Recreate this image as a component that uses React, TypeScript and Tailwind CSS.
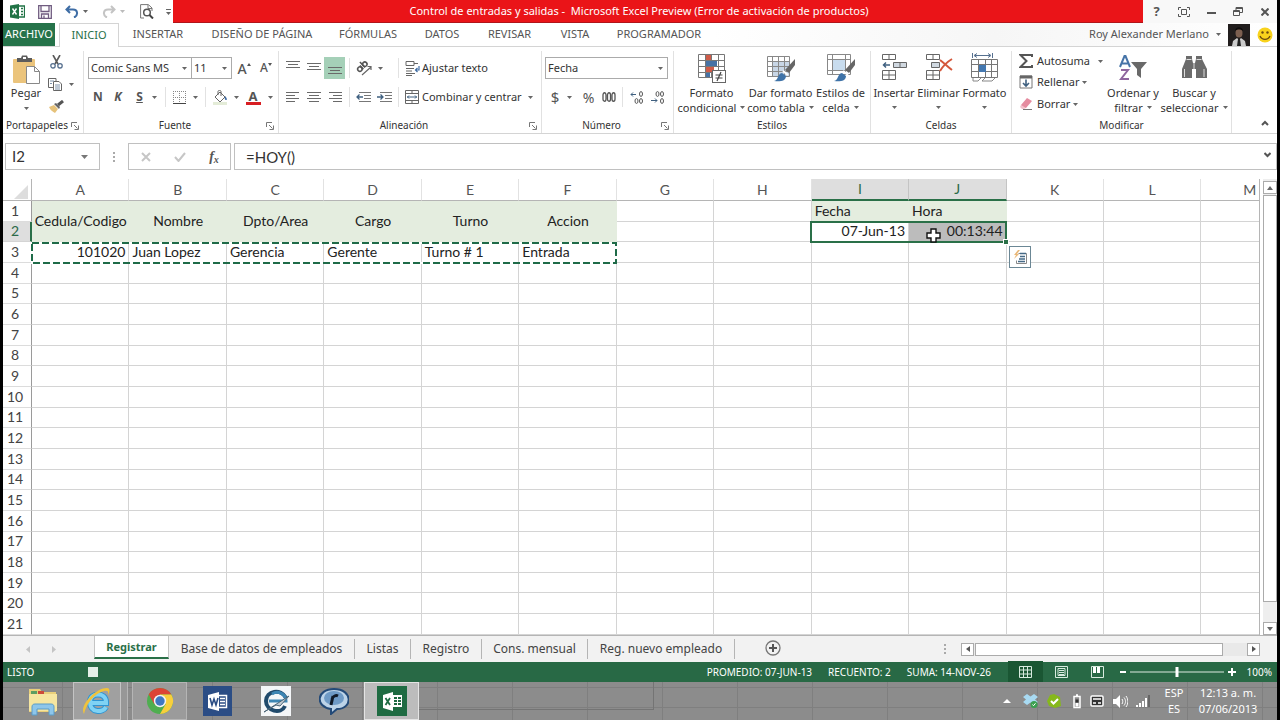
import type { ReactNode } from 'react';

const COLUMNS = ['A', 'B', 'C', 'D', 'E', 'F', 'G', 'H', 'I', 'J', 'K', 'L', 'M'];
const HEADINGS = ['Cedula/Codigo', 'Nombre', 'Dpto/Area', 'Cargo', 'Turno', 'Accion'];
const RECORD = ['101020', 'Juan Lopez', 'Gerencia', 'Gerente', 'Turno # 1', 'Entrada'];
const RIBBON_TABS = [
  { label: 'INSERTAR', box: 'w-[78px]' },
  { label: 'DISEÑO DE PÁGINA', box: 'w-[130px]' },
  { label: 'FÓRMULAS', box: 'w-[82px]' },
  { label: 'DATOS', box: 'w-[66px]' },
  { label: 'REVISAR', box: 'w-[69px]' },
  { label: 'VISTA', box: 'w-[62px]' },
  { label: 'PROGRAMADOR', box: 'w-[106px]' },
];
const SHEETS = [
  { label: 'Base de datos de empleados', box: 'w-[186px]' },
  { label: 'Listas', box: 'w-[56px]' },
  { label: 'Registro', box: 'w-[71px]' },
  { label: 'Cons. mensual', box: 'w-[106px]' },
  { label: 'Reg. nuevo empleado', box: 'w-[147px]' },
];

interface IconProps {
  w: number;
  h: number;
  children: ReactNode;
}

function Icon({ w, h, children }: IconProps) {
  return (
    <svg width={w} height={h} viewBox={`0 0 ${w} ${h}`} fill="none" className="shrink-0" aria-hidden="true">
      {children}
    </svg>
  );
}

function Caret({ color = '#666' }: { color?: string }) {
  return (
    <Icon w={5} h={3}>
      <path d="M0 0h5L2.500 3z" fill={color} />
    </Icon>
  );
}

interface ToolProps {
  label: string;
  box?: string;
  children: ReactNode;
}

function Tool({ label, box = 'w-[21px]', children }: ToolProps) {
  return (
    <button type="button" aria-label={label} className={`flex h-[22px] shrink-0 items-center justify-center ${box}`}>
      {children}
    </button>
  );
}

function Divider() {
  return <span className="h-5 w-px shrink-0 bg-[#e2e2e2]" />;
}

interface GroupProps {
  title: string;
  box: string;
  launcher?: boolean;
  children: ReactNode;
}

function Group({ title, box, launcher, children }: GroupProps) {
  return (
    <section className={`flex shrink-0 flex-col border-r border-[#e1e1e1] ${box}`}>
      <div className="h-[67px]">{children}</div>
      <div className="flex h-[15px] items-center text-[10px]">
        <h2 className="flex-1 text-center">{title}</h2>
        {launcher && (
          <button type="button" aria-label={`Más opciones de ${title}`} className="pr-1">
            <Icon w={8} h={8}>
              <path d="M.5 5V.5H6M3 3l3.500 3.500M7.500 3.500v4h-4" stroke="#777" />
            </Icon>
          </button>
        )}
      </div>
    </section>
  );
}

interface BigToolProps {
  lines: string[];
  box: string;
  children: ReactNode;
}

function BigTool({ lines, box, children }: BigToolProps) {
  return (
    <button type="button" className={`flex shrink-0 flex-col items-center pt-[2px] text-[11px] leading-[15px] ${box}`}>
      {children}
      <span className="mt-[2px] whitespace-nowrap">{lines[0]}</span>
      <span className="flex h-[15px] items-center gap-1 whitespace-nowrap">
        {lines[1]}
        <Caret />
      </span>
    </button>
  );
}

interface DropDownProps {
  label: string;
  value: string;
  box: string;
}

function DropDown({ label, value, box }: DropDownProps) {
  return (
    <span className={`relative flex h-[22px] items-center border border-[#ababab] ${box}`}>
      <select aria-label={label} className="h-full w-full appearance-none pl-[2px] text-[11px] outline-none">
        <option>{value}</option>
      </select>
      <span className="pointer-events-none absolute right-1">
        <Caret />
      </span>
    </span>
  );
}

function Lines({ widths, align }: { widths: number[]; align: 'left' | 'center' | 'right' }) {
  return (
    <Icon w={14} h={14}>
      {widths.map((width, i) => {
        const x = align === 'left' ? 0 : align === 'right' ? 14 - width : (14 - width) / 2;
        return <rect key={i} x={x} y={2 + i * 3} width={width} height={1} fill="#6a6a6a" />;
      })}
    </Icon>
  );
}

function TitleBar() {
  return (
    <header className="flex h-[23px] shrink-0 bg-white">
      <div className="flex w-[170px] items-center pl-[7px]">
        <Icon w={15} h={15}>
          <path d="M0 1.500 9 0v15L0 13.500z" fill="#217346" />
          <path d="M2.500 4.500l4 6M6.500 4.500l-4 6" stroke="#fff" strokeWidth="1.400" />
          <path d="M9 2h5.500v11H9M11 4.500h2M11 7.500h2M11 10.500h2" stroke="#217346" strokeWidth="1.300" />
        </Icon>
        <Tool label="Guardar" box="ml-2 w-6">
          <Icon w={14} h={14}>
            <path d="M.7.7h12.600v12.600H.7zM3 .7v5.800h8V.7M3.500 13V9h7v4M6 10.500V13" stroke="#705c80" strokeWidth="1.300" />
          </Icon>
        </Tool>
        <Tool label="Deshacer" box="ml-1 w-[22px]">
          <Icon w={14} h={13}>
            <path d="M5 1 1.500 4.500 5 8M2 4.500h6c5 0 5.500 6 1 8" stroke="#3e6da5" strokeWidth="2" />
          </Icon>
        </Tool>
        <Caret />
        <Tool label="Rehacer" box="ml-[10px] w-[22px]">
          <Icon w={14} h={13}>
            <path d="M9 1l3.500 3.500L9 8M12 4.500H6c-5 0-5.500 6-1 8" stroke="#c4c4c4" strokeWidth="2" />
          </Icon>
        </Tool>
        <Caret color="#bbb" />
        <Tool label="Vista previa" box="ml-[11px] w-[22px]">
          <Icon w={14} h={15}>
            <path d="M4 14H.6V.6h7.800L12 4v3M8 1v3.500h4" stroke="#777" />
            <circle cx="7" cy="8.500" r="3.300" stroke="#555" strokeWidth="1.500" />
            <path d="M9.500 11l3.500 3.500" stroke="#444" strokeWidth="2" />
          </Icon>
        </Tool>
        <Tool label="Personalizar" box="ml-1 w-3">
          <Icon w={5} h={6}>
            <path d="M0 .5h5" stroke="#666" />
            <path d="M0 3h5L2.500 6z" fill="#666" />
          </Icon>
        </Tool>
      </div>
      <h1 className="flex min-w-0 flex-1 items-center justify-center border-b border-[#b0151a] bg-[#ea1418] pr-[38px] text-[11px] whitespace-pre text-white">
        {'Control de entradas y salidas -  Microsoft Excel Preview (Error de activación de productos)'}
      </h1>
      <div className="flex w-[134px] items-center bg-[#f8f8f8]">
        <Tool label="Ayuda" box="w-[27px] text-[13px] font-bold text-[#555]">?</Tool>
        <Tool label="Pantalla" box="w-7">
          <Icon w={12} h={10}>
            <path d="M.5 3V.5H3M9 .5h2.500V3M11.500 7v2.500H9M3 9.500H.5V7M3.500 2.500h5v5h-5z" stroke="#555" />
          </Icon>
        </Tool>
        <Tool label="Minimizar" box="w-[26px]">
          <Icon w={9} h={8}>
            <path d="M0 5h9" stroke="#555" strokeWidth="2" />
          </Icon>
        </Tool>
        <Tool label="Restaurar" box="w-7">
          <Icon w={10} h={9}>
            <path d="M.5 3.500h6v5h-6zM.5 4.500h6M3 3V.5h6.500v5H7M3 1.500h6" stroke="#555" />
          </Icon>
        </Tool>
        <Tool label="Cerrar" box="w-[25px]">
          <Icon w={8} h={8}>
            <path d="M.5.5l7 7M7.500.5l-7 7" stroke="#555" strokeWidth="2" />
          </Icon>
        </Tool>
      </div>
    </header>
  );
}

function TabStrip() {
  return (
    <nav className="flex h-6 shrink-0 border-b border-[#d4d4d4] bg-white text-[11px] text-[#555]">
      <button type="button" className="w-[52px] bg-[#26734a] text-white">
        ARCHIVO
      </button>
      <button type="button" className="-mb-px ml-1 w-[60px] border border-b-0 border-[#d4d4d4] bg-white text-[#2a7048]">
        INICIO
      </button>
      {RIBBON_TABS.map(tab => (
        <button key={tab.label} type="button" className={`shrink-0 whitespace-nowrap ${tab.box}`}>
          {tab.label}
        </button>
      ))}
      <div className="flex flex-1 items-center justify-end bg-linear-to-r from-white via-[#f6f6f6] to-white text-[11px]">
        <button type="button" className="flex items-center gap-[7px]">
          Roy Alexander Merlano
          <Caret />
        </button>
        <svg width="22" height="22" viewBox="0 0 22 22" className="ml-[7px] shrink-0" aria-hidden="true">
          <rect width="22" height="22" fill="#211d1d" />
          <ellipse cx="11" cy="9" rx="3.500" ry="4.500" fill="#7c5f50" />
          <path d="M7 7c0-5 8-5 8 0-2-2-6-2-8 0z" fill="#0e0c0c" />
          <path d="M4 22l1-5 4-3 2 2 2-2 4 3 1 5z" fill="#ccc" />
          <path d="M10 15h2l1 7H9z" fill="#222" />
        </svg>
        <svg width="16" height="16" viewBox="0 0 16 16" className="mr-1 ml-[7px] shrink-0" aria-hidden="true">
          <circle cx="8" cy="8" r="7.500" fill="#f8d21c" />
          <circle cx="5.500" cy="5.500" r="1.200" fill="#6a4a10" />
          <circle cx="10.500" cy="5.500" r="1.200" fill="#6a4a10" />
          <path d="M3 9c2 4.500 8 4.500 10 0" stroke="#6a4a10" strokeWidth="1.300" fill="none" />
        </svg>
      </div>
    </nav>
  );
}

function ClipboardGroup() {
  return (
    <Group title="Portapapeles" box="w-[81px]" launcher>
      <div className="flex pl-[5px]">
        <button type="button" className="flex w-9 flex-col items-center pt-1 text-[11px]">
          <Icon w={28} h={29}>
            <rect x="1" y="4" width="22" height="24" rx="1" fill="#ebc47c" />
            <path d="M5 7V3h4l1-2.500h5L16 3h4v4z" fill="#5c5c5c" />
            <rect x="11" y="2" width="3" height="2" fill="#fff" />
            <path d="M14.500 11.500h8l5 5v12h-13z" fill="#fff" stroke="#888" />
            <path d="M22.500 11.500v5h5" stroke="#888" />
          </Icon>
          <span className="mb-[5px] leading-[18px]">Pegar</span>
          <Caret />
        </button>
        <div className="flex flex-col">
          <Tool label="Cortar" box="w-6">
            <Icon w={13} h={14}>
              <path d="M3 0l5 9M10 0L5 9" stroke="#5a5a5a" strokeWidth="1.600" />
              <circle cx="3" cy="10.800" r="2.200" stroke="#56708f" strokeWidth="1.300" />
              <circle cx="10" cy="10.800" r="2.200" stroke="#56708f" strokeWidth="1.300" />
            </Icon>
          </Tool>
          <Tool label="Copiar" box="ml-1 gap-[7px]">
            <Icon w={14} h={13}>
              <path d="M8 3V.5H.5v9H5" stroke="#666" />
              <path d="M5.500 3.500H11l2.500 2.500v6.500h-8z" fill="#fff" stroke="#666" />
              <path d="M2 3h4M2 5.500h2M7 7h5M7 9h5M7 11h5" stroke="#7d93ad" />
            </Icon>
            <Caret />
          </Tool>
          <Tool label="Copiar formato" box="w-6">
            <Icon w={15} h={13}>
              <path d="M0 7l5-2 4 4-3 4c-2-1-5-3-6-6z" fill="#e6c27a" />
              <path d="M5 4l2-1 4 4-1 2z" fill="#666" />
              <path d="M9 5l5-4" stroke="#555" strokeWidth="3" />
            </Icon>
          </Tool>
        </div>
      </div>
    </Group>
  );
}

function FontGroup() {
  return (
    <Group title="Fuente" box="w-[195px]" launcher>
      <div className="flex flex-col gap-[7px] pt-[6px] pl-1">
        <div className="flex items-center">
          <DropDown label="Fuente" value="Comic Sans MS" box="w-[104px]" />
          <DropDown label="Tamaño" value="11" box="w-10 border-l-0" />
          <Tool label="Aumentar tamaño" box="w-6 text-[14px] font-medium text-[#555]">
            A<span className="-mt-2"><Icon w={4} h={3}><path d="M0 3h4L2 0z" fill="#555" /></Icon></span>
          </Tool>
          <Tool label="Reducir tamaño" box="w-5 text-[12px] font-medium text-[#555]">
            A<span className="-mt-2"><Icon w={4} h={3}><path d="M0 0h4L2 3z" fill="#555" /></Icon></span>
          </Tool>
        </div>
        <div className="flex items-center text-[12px] text-[#555]">
          <Tool label="Negrita" box="w-5 font-bold">N</Tool>
          <Tool label="Cursiva" box="w-5 font-bold italic">K</Tool>
          <Tool label="Subrayado" box="w-[37px] gap-[9px] font-bold">
            <span className="underline">S</span>
            <Caret />
          </Tool>
          <Divider />
          <Tool label="Bordes" box="mx-1 w-[31px] gap-[7px]">
            <Icon w={13} h={13}>
              <path d="M.5 0v12M6.500 0v12M12.500 0v12M0 .5h13M0 6.500h13" stroke="#888" strokeDasharray="1 1" />
              <path d="M0 12.500h13" stroke="#444" />
            </Icon>
            <Caret />
          </Tool>
          <Divider />
          <Tool label="Color de relleno" box="ml-[3px] w-[34px] gap-[6px]">
            <Icon w={15} h={15}>
              <path d="M2 7l5-5 5 5-5 5z" fill="#fff" stroke="#666" />
              <path d="M5 5V1.500c0-1.500 3-1.500 3 0V6" stroke="#666" />
              <path d="M12 6c2 2 2.500 4 1 4s-1.500-2-1-4z" fill="#3f6ca4" />
              <rect x="0" y="12" width="14" height="3" fill="#e4ecd8" />
            </Icon>
            <Caret />
          </Tool>
          <Tool label="Color de fuente" box="w-8 gap-[7px]">
            <span className="w-[15px] border-b-[3px] border-[#d81e23] text-[13px] leading-[12px] font-bold">A</span>
            <Caret />
          </Tool>
        </div>
      </div>
    </Group>
  );
}

function AlignGroup() {
  return (
    <Group title="Alineación" box="w-[263px]" launcher>
      <div className="flex flex-col gap-[7px] pt-[6px] pl-[3px] text-[11px]">
        <div className="flex items-center">
          <Tool label="Alinear arriba" box="w-[21px] pb-1"><Lines widths={[14, 10, 14]} align="center" /></Tool>
          <Tool label="Alinear en medio"><Lines widths={[14, 10, 14]} align="center" /></Tool>
          <Tool label="Alinear abajo" box="w-[21px] bg-[#a5d0b8] pt-2"><Lines widths={[14, 10, 14]} align="center" /></Tool>
          <span className="w-1" />
          <Divider />
          <Tool label="Orientación" box="mx-[4px] w-[40px] gap-1 pr-3">
            <Icon w={20} h={20}>
              <g stroke="#555" strokeWidth="1.500" transform="rotate(-45 8 9)">
                <circle cx="5" cy="9" r="2.200" />
                <path d="M7.500 6.500v5M10 4v7.500" />
                <circle cx="12" cy="9" r="2.200" />
              </g>
              <path d="M8 17l9-8M13.500 8.500H17V12" stroke="#666" strokeWidth="1.200" />
            </Icon>
            <Caret />
          </Tool>
          <Divider />
          <button type="button" className="flex items-center gap-[2px] pl-[6px]">
            <Icon w={15} h={15}>
              <path d="M1 .5v4h8v-4zM9 2.500h4M1 7.500h8M1 10h6M1 12.500h9M1 14.500h6" stroke="#666" />
              <path d="M14 5v4h-3M12.500 7 10.500 9l2 2" stroke="#3f6ca4" strokeWidth="1.200" />
            </Icon>
            Ajustar texto
          </button>
        </div>
        <div className="flex items-center">
          <Tool label="Alinear a la izquierda"><Lines widths={[13, 9, 13, 9]} align="left" /></Tool>
          <Tool label="Centrar"><Lines widths={[14, 10, 14, 10]} align="center" /></Tool>
          <Tool label="Alinear a la derecha"><Lines widths={[13, 9, 13, 9]} align="right" /></Tool>
          <span className="w-1" />
          <Divider />
          <span className="w-[3px]" />
          <Tool label="Disminuir sangría">
            <Icon w={15} h={11}>
              <path d="M3 .5h12M8 3.500h7M8 6.500h7M3 9.500h12" stroke="#777" />
              <path d="M7 5H1M3.500 2.500 1 5l2.500 2.500" stroke="#3f6080" strokeWidth="1.300" />
            </Icon>
          </Tool>
          <Tool label="Aumentar sangría">
            <Icon w={15} h={11}>
              <path d="M3 .5h12M8 3.500h7M8 6.500h7M3 9.500h12" stroke="#777" />
              <path d="M0 5h6M3.500 2.500 6 5 3.500 7.500" stroke="#3f6080" strokeWidth="1.300" />
            </Icon>
          </Tool>
          <span className="w-[3px]" />
          <Divider />
          <button type="button" className="flex items-center gap-[2px] pl-[6px] whitespace-nowrap">
            <Icon w={15} h={14}>
              <path d="M.5.5h13v13H.5zM.5 3.500h13M.5 10.500h13M7 .5v3M7 10.500v3" stroke="#666" />
              <path d="M2 7h10M4 5.500 2.500 7 4 8.500M10 5.500 11.500 7 10 8.500" stroke="#3f6080" />
            </Icon>
            Combinar y centrar
            <span className="ml-1"><Caret /></span>
          </button>
        </div>
      </div>
    </Group>
  );
}

function NumberGroup() {
  return (
    <Group title="Número" box="w-[132px]" launcher>
      <div className="flex flex-col gap-[7px] pt-[6px] pl-[3px] text-[#555]">
        <DropDown label="Formato de número" value="Fecha" box="w-[123px] text-[#333]" />
        <div className="flex items-center">
          <Tool label="Moneda" box="w-[33px] gap-2 text-[15px]">
            $<Caret />
          </Tool>
          <Tool label="Porcentaje" box="w-[21px] text-[14px]">%</Tool>
          <Tool label="Millares" box="w-[19px]">
            <Icon w={14} h={10}>
              <path d="M1 3c0-3 3-3 3 0v4c0 3-3 3-3 0zM5.500 3c0-3 3-3 3 0v4c0 3-3 3-3 0zM10 3c0-3 3-3 3 0v4c0 3-3 3-3 0z" stroke="#555" strokeWidth="1.300" />
            </Icon>
          </Tool>
          <span className="w-1" />
          <Divider />
          <Tool label="Aumentar decimales" box="ml-1 w-[20px]">
            <Icon w={14} h={13}>
              <path d="M6 3.500H1M3 1.500 1 3.500l2 2" stroke="#3f6080" />
              <ellipse cx="11" cy="3" rx="1.500" ry="2.400" stroke="#555" />
              <ellipse cx="6.500" cy="10" rx="1.500" ry="2.400" stroke="#555" />
              <ellipse cx="11" cy="10" rx="1.500" ry="2.400" stroke="#555" />
            </Icon>
          </Tool>
          <Tool label="Disminuir decimales">
            <Icon w={14} h={13}>
              <path d="M0 9.500h6M4 7.500l2 2-2 2" stroke="#3f6080" />
              <ellipse cx="11" cy="3" rx="1.500" ry="2.400" stroke="#555" />
              <ellipse cx="6.500" cy="3" rx="1.500" ry="2.400" stroke="#555" />
              <ellipse cx="11" cy="10" rx="1.500" ry="2.400" stroke="#555" />
            </Icon>
          </Tool>
        </div>
      </div>
    </Group>
  );
}

function Brush() {
  return (
    <>
      <path d="M28 6v6l-6 8-4-3z" fill="#666" />
      <path d="M16 18l5 4" stroke="#fff" strokeWidth="2" />
      <path d="M7 28c5-1 3-7 8-8l4 3c0 5-6 6-12 5z" fill="#3f73a8" />
    </>
  );
}

function StylesGroup() {
  return (
    <Group title="Estilos" box="w-[197px]">
      <div className="flex">
        <BigTool lines={['Formato', 'condicional']} box="w-[75px]">
          <Icon w={28} h={30}>
            <path d="M.5 1.500h26v23H.5zM.5 7.500h26M.5 13.500h26M.5 19.500h26M7.500 1v24M13.500 1v24M20.500 1v24" stroke="#777" />
            <rect x="8" y="2" width="5" height="5" fill="#cf5b48" />
            <rect x="8" y="8" width="11" height="5" fill="#4672a6" />
            <rect x="8" y="14" width="8" height="5" fill="#cf5b48" />
            <rect x="8" y="20" width="4" height="4" fill="#4672a6" />
            <rect x="14.500" y="17.500" width="13" height="12" fill="#fff" stroke="#666" />
            <path d="M17.500 22h7M17.500 25h7M23 19l-4 9" stroke="#444" strokeWidth="1.200" />
          </Icon>
        </BigTool>
        <BigTool lines={['Dar formato', 'como tabla']} box="w-[63px]">
          <Icon w={28} h={30}>
            <rect x="6" y="9" width="16" height="14" fill="#c8d6e6" />
            <path d="M.5 3.500h22v20H.5zM.5 8.500h22M.5 13.500h22M.5 18.500h22M5.500 3v20M11.500 3v20M17.500 3v20" stroke="#888" />
            <Brush />
          </Icon>
        </BigTool>
        <BigTool lines={['Estilos de', 'celda']} box="w-[57px]">
          <Icon w={28} h={30}>
            <rect x="6" y="7" width="12" height="10" fill="#c8dcee" />
            <path d="M.5 1.500h23v20H.5zM.5 6.500h23M.5 17.500h23M5.500 1v20M18.500 1v20" stroke="#888" />
            <Brush />
          </Icon>
        </BigTool>
      </div>
    </Group>
  );
}

function CellsGroup() {
  return (
    <Group title="Celdas" box="w-[141px]">
      <div className="flex">
        <BigTool lines={['Insertar', '']} box="w-[46px]">
          <Icon w={26} h={30}>
            <path d="M1.500 1.500h13v5h-13zM8 1.500v5M1.500 17.500h13v9h-13zM8 17.500v9M1.500 22h13" stroke="#666" />
            <path d="M12.500 9.500h13v5h-13z" fill="#d0d8e0" stroke="#666" />
            <path d="M19 9.500v5" stroke="#666" />
            <path d="M9 12H2.500M5 9.500 2.500 12 5 14.500" stroke="#3f6080" strokeWidth="1.500" />
          </Icon>
        </BigTool>
        <BigTool lines={['Eliminar', '']} box="w-[43px]">
          <Icon w={28} h={30}>
            <path d="M1.500 1.500h13v5h-13zM8 1.500v5M1.500 17.500h13v9h-13zM8 17.500v9M1.500 22h13" stroke="#666" />
            <path d="M6.500 9.500h8v5h-8z" fill="#d0d8e0" stroke="#666" />
            <path d="M15 7c4 3 8 7 12 10M27 6c-5 3-9 7-12 12" stroke="#d4583c" strokeWidth="2" />
          </Icon>
        </BigTool>
        <BigTool lines={['Formato', '']} box="w-[49px]">
          <Icon w={27} h={30}>
            <path d="M1.500 0v5M21.500 0v5M4 2.500h15M6 .5l-3 2 3 2M17 .5l3 2-3 2" stroke="#56708f" />
            <path d="M.5 6.500h26v18H.5zM.5 11.500h26M.5 18.500h26M7.500 6v18M14.500 6v18M20.500 6v18" stroke="#777" />
            <rect x="8" y="12" width="7" height="7" fill="#4478b0" />
            <path d="M2 25v3h5l3-3M14 25l-3 3h10l3-3" stroke="#888" />
          </Icon>
        </BigTool>
      </div>
    </Group>
  );
}

function EditGroup() {
  return (
    <Group title="Modificar" box="w-[220px]">
      <div className="flex">
        <div className="flex w-[91px] flex-col pl-[7px] text-[11px]">
          <button type="button" className="flex h-5 items-center">
            <Icon w={15} h={14}>
              <path d="M13 3V1H1.500l6 6-6 6H13v-2" stroke="#555" strokeWidth="2" />
            </Icon>
            <span className="ml-[3px] flex-1 text-left">Autosuma</span>
            <Caret />
          </button>
          <button type="button" className="flex h-[22px] items-center gap-[3px]">
            <Icon w={15} h={14}>
              <path d="M1 1h12v12H1z" stroke="#777" />
              <path d="M1 2h12" stroke="#666" strokeWidth="3" />
              <path d="M7 4.500V11M4 8l3 3 3-3" stroke="#3f6080" strokeWidth="1.600" />
            </Icon>
            Rellenar
            <Caret />
          </button>
          <button type="button" className="flex h-[22px] items-center gap-[3px]">
            <Icon w={15} h={14}>
              <path d="M2 8l6-7 5 3-6 7-4 0z" fill="#e58ca0" />
              <path d="M2 8l5 3-2 1H3L1 10z" fill="#f3c3cd" />
              <path d="M4 12.500h9" stroke="#777" />
            </Icon>
            Borrar
            <Caret />
          </button>
        </div>
        <BigTool lines={['Ordenar y', 'filtrar']} box="w-[60px]">
          <Icon w={28} h={30}>
            <path d="M1 14 5.500 3h1L11 14M3 10.500h6" stroke="#4674a8" strokeWidth="2" />
            <path d="M2 17h7L2 26h8" stroke="#8f679f" strokeWidth="2" />
            <path d="M12 9h16l-6 7v9l-4-3v-6z" fill="#696969" />
          </Icon>
        </BigTool>
        <BigTool lines={['Buscar y', 'seleccionar']} box="w-[62px]">
          <Icon w={26} h={30}>
            <path d="M5 6V3h6v3l1 4h2l1-4V3h6v3l5 10v9H15v-9h-4v9H1v-9z" fill="#6b6b6b" />
            <path d="M5.500 6.500h5M15.500 6.500h5M3.500 16v8M23 16v8M13 10v6" stroke="#ddd" />
          </Icon>
        </BigTool>
      </div>
    </Group>
  );
}

function FormulaBar() {
  return (
    <div className="my-[9px] flex h-[27px] shrink-0 pl-[2px] text-[#333]">
      <label className="flex w-[95px] items-center border border-[#c0c0c0] bg-white pr-[11px]">
        <input aria-label="Cuadro de nombres" defaultValue="I2" className="w-full min-w-0 pl-[6px] font-['Lato',sans-serif] text-[15px] outline-none" />
        <Icon w={7} h={4}>
          <path d="M0 0h7L3.500 4z" fill="#777" />
        </Icon>
      </label>
      <span className="flex w-7 items-center justify-center">
        <Icon w={2} h={10}>
          <path d="M0 0h2v2H0zM0 4h2v2H0zM0 8h2v2H0z" fill="#aaa" />
        </Icon>
      </span>
      <div className="flex w-[103px] items-center border border-[#c0c0c0] bg-white pl-[1px]">
        <Tool label="Cancelar" box="w-8">
          <Icon w={10} h={10}><path d="M1 1l8 8M9 1 1 9" stroke="#c6c6c6" strokeWidth="2" /></Icon>
        </Tool>
        <Tool label="Introducir" box="w-9">
          <Icon w={12} h={10}><path d="M1 5l3.500 4L11 1" stroke="#c6c6c6" strokeWidth="2" /></Icon>
        </Tool>
        <Tool label="Insertar función" box="w-8 font-['Liberation_Serif',serif] text-[14px] font-bold italic leading-[14px] text-[#555]">
          <span>f<sub className="text-[10px]">x</sub></span>
        </Tool>
      </div>
      <label className="ml-[3px] flex flex-1 items-start border border-[#c0c0c0] bg-white pr-[5px]">
        <input aria-label="Barra de fórmulas" defaultValue="=HOY()" className="h-full w-full pl-[11px] font-['Lato',sans-serif] text-[15px] outline-none" />
        <span className="mt-2">
          <Icon w={7} h={6}><path d="M.5 1l3 3 3-3" stroke="#555" strokeWidth="2" /></Icon>
        </span>
      </label>
    </div>
  );
}

function cellContent(column: number, row: number) {
  if (row === 3 && column < 6) return RECORD[column];
  if (row === 1 && column === 8) return 'Fecha';
  if (row === 1 && column === 9) return 'Hora';
  if (row === 2 && column === 8) return '07-Jun-13';
  if (row === 2 && column === 9) return '00:13:44';
  return '';
}

function cellLook(column: number, row: number) {
  const side = (row === 3 && column === 0) || row === 2 ? 'text-right' : 'text-left';
  if (row === 1 && (column === 8 || column === 9)) return `bg-[#e4eddf] border-[#e4eddf] ${side}`;
  if (row === 2 && column === 9) return `bg-[#bcbcbc] border-[#d4d4d4] ${side}`;
  return `border-[#d4d4d4] ${side}`;
}

function Sheet() {
  return (
    <div className="relative min-w-0 flex-1 overflow-hidden border-r border-[#b5b5b5]">
      <table className="h-[456px] w-[1296px] table-fixed border-separate border-spacing-0 font-['Lato',sans-serif] text-[14px] leading-[18px] text-[#222]">
        <thead>
          <tr className="h-[22px] text-[#555]">
            <th className="w-[29px] border-r border-b border-[#b5b5b5] p-0">
              <svg width="14" height="14" viewBox="0 0 14 14" className="mt-1 ml-[11px]" aria-hidden="true">
                <path d="M14 0v14H0z" fill="#ddd" />
              </svg>
            </th>
            {COLUMNS.map(name => (
              <th
                key={name}
                scope="col"
                className={
                  name === 'I' || name === 'J'
                    ? 'border-r border-b-2 border-r-[#c4c4c4] border-b-[#2a7048] bg-[#dedede] p-0 font-normal text-[#2a6a48]'
                    : 'border-r border-b border-r-[#e2e2e2] border-b-[#b5b5b5] p-0 font-normal'
                }
              >
                {name}
              </th>
            ))}
          </tr>
        </thead>
        <tbody>
          {Array.from({ length: 21 }, (_, i) => i + 1).map(row => (
            <tr key={row}>
              <th
                scope="row"
                className={
                  row === 2
                    ? 'border-r-2 border-b border-r-[#2a7048] border-b-[#d4d4d4] bg-[#dedede] p-0 pr-[3px] font-normal text-[#2a6a48]'
                    : 'border-r border-b border-r-[#9a9a9a] border-b-[#dcdcdc] p-0 pr-1 font-normal text-[#444]'
                }
              >
                {row}
              </th>
              {COLUMNS.map((name, column) => {
                if (column < 6 && row === 1) {
                  return (
                    <td key={name} rowSpan={2} className="bg-[#e4eddf] p-0 pb-px text-center whitespace-nowrap">
                      {HEADINGS[column]}
                    </td>
                  );
                }
                if (column < 6 && row === 2) return null;
                return (
                  <td key={name} className={`overflow-hidden border-r border-b px-[3px] py-0 whitespace-nowrap ${cellLook(column, row)}`}>
                    {cellContent(column, row)}
                  </td>
                );
              })}
            </tr>
          ))}
        </tbody>
      </table>

      {/* Copied range */}
      <svg width="586" height="22" className="pointer-events-none absolute top-[63px] left-7" aria-hidden="true">
        <rect x="1" y="1" width="584" height="20" fill="none" stroke="#fff" strokeWidth="2" />
        <rect x="1" y="1" width="584" height="20" fill="none" stroke="#1f6b48" strokeWidth="2" strokeDasharray="7 3" />
      </svg>

      {/* Selected range, cross pointer and quick analysis */}
      <div className="pointer-events-none absolute top-[42px] left-[807px] h-[22px] w-[197px] border-2 border-[#2a7048]">
        <span className="absolute -right-1 -bottom-1 h-[6px] w-[6px] border border-white bg-[#2a7048]" />
      </div>
      <svg width="15" height="15" viewBox="0 0 15 15" className="pointer-events-none absolute top-[49px] left-[923px]" aria-hidden="true">
        <path d="M5 1h5v4h4v5h-4v4H5v-4H1V5h4z" fill="#fff" stroke="#111" strokeWidth="1.400" />
      </svg>
      <button type="button" aria-label="Análisis rápido" className="absolute top-[67px] left-[1006px] flex h-[22px] w-[22px] items-center justify-center border border-[#6b8795] bg-white">
        <Icon w={15} h={15}>
          <path d="M5.500 3.500h8v10h-10v-3" stroke="#888" />
          <path d="M7 3.500h6M7 6.500h5M6 9h6M5 11.500h7" stroke="#466a86" strokeWidth="1.300" />
          <path d="M5 0 1 5h2L1 9l5-5H4l3-4z" fill="#eab877" />
        </Icon>
      </button>
    </div>
  );
}

function VerticalScroll() {
  return (
    <div className="ml-[3px] flex w-[14px] shrink-0 flex-col bg-[#eee] pt-[2px]">
      <button type="button" aria-label="Subir" className="flex h-[13px] items-center justify-center border border-[#ababab] bg-white">
        <Icon w={6} h={4}><path d="M0 4h6L3 0z" fill="#666" /></Icon>
      </button>
      <div className="mt-px h-[407px] border border-[#ababab] bg-white" />
      <div className="flex-1" />
      <button type="button" aria-label="Bajar" className="flex h-[13px] items-center justify-center border border-[#ababab] bg-white">
        <Icon w={6} h={4}><path d="M0 0h6L3 4z" fill="#666" /></Icon>
      </button>
    </div>
  );
}

function SheetTabs() {
  return (
    <div className="flex h-[27px] shrink-0 items-stretch border-t border-[#b5b5b5] bg-[#f2f2f2] text-[12px] text-[#444]">
      <div className="flex w-[91px] items-center justify-center gap-[22px] pr-[15px]">
        <button type="button" aria-label="Hoja anterior"><Icon w={4} h={7}><path d="M4 0v7L0 3.500z" fill="#c4c4c4" /></Icon></button>
        <button type="button" aria-label="Hoja siguiente"><Icon w={4} h={7}><path d="M0 0v7l4-3.500z" fill="#c4c4c4" /></Icon></button>
      </div>
      <button type="button" className="mb-[3px] w-[75px] border-x border-b-2 border-x-[#c4c4c4] border-b-[#2a7048] bg-white pt-px text-[11px] font-bold text-[#2a7048]">
        Registrar
      </button>
      {SHEETS.map(sheet => (
        <button key={sheet.label} type="button" className={`my-[3px] shrink-0 border-r border-[#b5b5b5] whitespace-nowrap ${sheet.box}`}>
          {sheet.label}
        </button>
      ))}
      <button type="button" aria-label="Hoja nueva" className="mb-[2px] ml-[30px]">
        <Icon w={16} h={16}>
          <circle cx="8" cy="8" r="7" stroke="#777" strokeWidth="1.300" />
          <path d="M8 4v8M4 8h8" stroke="#555" strokeWidth="2" />
        </Icon>
      </button>
      <div className="flex flex-1 items-center justify-end">
        <Icon w={2} h={10}>
          <path d="M0 0h2v2H0zM0 4h2v2H0zM0 8h2v2H0z" fill="#aaa" />
        </Icon>
        <div className="mr-[17px] ml-[15px] flex h-[13px] w-[299px] bg-[#e9e9e9]">
          <button type="button" aria-label="Izquierda" className="flex w-[13px] items-center justify-center border border-[#ababab] bg-white">
            <Icon w={4} h={6}><path d="M4 0v6L0 3z" fill="#555" /></Icon>
          </button>
          <div className="ml-px w-[248px] border border-[#ababab] bg-white" />
          <div className="flex-1" />
          <button type="button" aria-label="Derecha" className="flex w-[13px] items-center justify-center border border-[#ababab] bg-white">
            <Icon w={4} h={6}><path d="M0 0v6l4-3z" fill="#555" /></Icon>
          </button>
        </div>
      </div>
    </div>
  );
}

function StatusBar() {
  return (
    <footer className="flex h-5 shrink-0 items-center bg-[#286945] pl-1 text-[10px] text-white">
      <span className="w-[81px]">LISTO</span>
      <span className="h-[10px] w-[10px] bg-[#e4efe8]" />
      <div className="flex flex-1 justify-end gap-4 pr-[17px] whitespace-nowrap">
        <span>PROMEDIO: 07-JUN-13</span>
        <span>RECUENTO: 2</span>
        <span>SUMA: 14-NOV-26</span>
      </div>
      <Tool label="Normal" box="h-5 w-[35px] bg-[#1a5633]">
        <Icon w={13} h={12}><path d="M.5.5h12v11H.5zM.5 4h12M.5 8h12M4.500 0v12M8.500 0v12" stroke="#d8ebdf" /></Icon>
      </Tool>
      <Tool label="Diseño de página" box="h-5 w-[36px]">
        <Icon w={13} h={12}><path d="M.5.5h12v11H.5zM3 2.500h7v7H3zM4 4.500h5M4 6.500h5M4 8.500h5" stroke="#d8ebdf" /></Icon>
      </Tool>
      <Tool label="Salto de página" box="h-5 w-[36px]">
        <Icon w={13} h={12}>
          <path d="M.5.5h12v11H.5z" stroke="#d8ebdf" />
          <path d="M2 1h3v6H2zM6 1h3v6H6z" fill="#fff" />
        </Icon>
      </Tool>
      <button type="button" aria-label="Alejar" className="ml-[5px]">
        <Icon w={6} h={6}><path d="M0 3h6" stroke="#fff" strokeWidth="2" /></Icon>
      </button>
      <Icon w={102} h={12}>
        <path d="M4 6h94" stroke="#dceae1" />
        <path d="M51 1v10" stroke="#fff" strokeWidth="3" />
      </Icon>
      <button type="button" aria-label="Acercar">
        <Icon w={8} h={8}><path d="M0 4h8M4 0v8" stroke="#fff" strokeWidth="2" /></Icon>
      </button>
      <span className="mr-[5px] w-[36px] text-right">100%</span>
    </footer>
  );
}

function TaskBar() {
  return (
    <div className="flex min-h-[38px] flex-1 items-stretch bg-[#8c8c8c] bg-[linear-gradient(to_right,#7f7f7f_1px,transparent_1px),linear-gradient(to_bottom,#7f7f7f_1px,transparent_1px)] bg-[size:75px_20px] bg-[position:59px_5px] text-white">
      <div className="flex flex-1 items-stretch">
        <div className="flex w-[651px] items-stretch pl-[14px]">
          <Tool label="Explorador" box="h-full w-[52px]">
            <Icon w={30} h={30}>
              <path d="M1 3h11l2 3h14v20H1z" fill="#e9cf7a" />
              <path d="M3 5h6v3H3z" fill="#5d9e62" />
              <path d="M10 5h6v3h-6z" fill="#cc4a3a" />
              <path d="M1 8h28v17H1z" fill="#f6e6a0" />
              <path d="M4 29v-8c0-2 1-3 3-3h16c2 0 3 1 3 3v8h-5v-6h-12v6z" fill="#8ec6ea" stroke="#5a9cc8" />
            </Icon>
          </Tool>
          <Tool label="Internet Explorer" box="ml-1 h-full w-12 border border-[#c4c4c4] bg-[#a0a0a0]">
            <Icon w={32} h={30}>
              <path d="M25 21c-3 6-16 6-16-5 0-10 16-10 16 0v1H11" stroke="#2f94d2" strokeWidth="6" />
              <path d="M25 21c-3 6-16 6-16-5 0-10 16-10 16 0v1H11" stroke="#7fd2f4" strokeWidth="4" />
              <path d="M3 28C-2 20 14 2 26 2c4 0 2 6 1 7 1-4-1-5-4-4C14 7 5 18 3 28z" fill="#f0c33c" />
            </Icon>
          </Tool>
          <span className="mr-1 flex w-[7px] border-r border-[#b5b5b5] bg-[#979797]" />
          <Tool label="Chrome" box="h-full w-[55px] border border-[#b5b5b5] bg-[#9b9b9b]">
            <svg width="28" height="28" viewBox="0 0 28 28" aria-hidden="true">
              <circle cx="14" cy="14" r="13" fill="#4fae50" />
              <path d="M2.700 7.500A13 13 0 0 1 25.300 7.500H14L8.400 17.200z" fill="#dc4436" />
              <path d="M25.300 7.500A13 13 0 0 1 14 27l5.600-9.700L14 7.500z" fill="#f8cf3c" />
              <circle cx="14" cy="14" r="6.200" fill="#f2f2f2" />
              <circle cx="14" cy="14" r="4.700" fill="#3f78c2" />
            </svg>
          </Tool>
          <Tool label="Word" box="h-full w-[60px]">
            <Icon w={29} h={30}>
              <path d="M0 0h29v30H0z" fill="#2b4d85" />
              <path d="M15.500 9.500h8v12h-8M17 12.500h5M17 15.500h5M17 18.500h5" stroke="#fff" strokeWidth="1.500" />
              <path d="M5 9l11-3v19L5 22z" fill="#fff" />
              <path d="M7 12l2 7 2-6 2 6 2-7" stroke="#2b4d85" strokeWidth="1.600" />
            </Icon>
          </Tool>
          <Tool label="Navegador" box="h-full w-[57px]">
            <Icon w={30} h={30}>
              <path d="M0 0h30v30H0z" fill="#f4f6f8" />
              <path d="M24 20c-4 9-19 5-19-5S20 2 25 12" stroke="#204a6c" strokeWidth="4" />
              <path d="M8 15h17C25 8 17 4 11 8" stroke="#3d86b4" strokeWidth="3" />
              <path d="M3 26 28 10l-9 10-4-1z" fill="#c2ccd4" stroke="#4a6476" />
            </Icon>
          </Tool>
          <Tool label="RealPlayer" box="h-full w-[60px]">
            <Icon w={30} h={28}>
              <path d="M15 2c19 0 19 20 3 20l-6 5v-5C-4 20-3 2 15 2z" fill="#bcd3e8" stroke="#234a78" strokeWidth="2" />
              <ellipse cx="15" cy="11" rx="10" ry="7" fill="#6e9ac6" />
              <path d="M12 18l2-9M13 12c1-3 4-4 6-3" stroke="#101a28" strokeWidth="3" />
            </Icon>
          </Tool>
          <Tool label="Excel" box="h-full w-[55px] border border-[#e4e4e4] bg-[#bcbcbc]">
            <Icon w={30} h={30}>
              <path d="M0 0h30v30H0z" fill="#1e6b42" />
              <path d="M16 9h9v12h-9" fill="#fff" />
              <path d="M17 11h3v2h-3zM21 11h3v2h-3zM17 14h3v2h-3zM21 14h3v2h-3zM17 17h3v2h-3zM21 17h3v2h-3z" fill="#1e6b42" />
              <path d="M6 9l10-3v19L6 22z" fill="#fff" />
              <path d="M8.500 12l4.500 7M13 12l-4.500 7" stroke="#1e6b42" strokeWidth="1.800" />
            </Icon>
          </Tool>
          <span className="mb-[10px] flex-1 border-r border-b border-[#747474]" />
        </div>
      </div>
      <div className="flex items-center text-[11px]">
        <Tool label="Iconos ocultos" box="w-4"><Icon w={8} h={4}><path d="M0 4h8L4 0z" fill="#fff" /></Icon></Tool>
        <Tool label="Dropbox" box="ml-[3px] w-6">
          <Icon w={15} h={14}>
            <path d="M4 0l3.500 2.500L11 0l4 3-3 2.500 3 2.500-4 3-3.500-2.500L4 11 0 8l3-2.500L0 3z" fill="#a8daf2" />
            <circle cx="11" cy="10.500" r="3.500" fill="#3ba050" />
            <path d="M9.500 10.500l1 1.200 2-2.400" stroke="#fff" />
          </Icon>
        </Tool>
        <Tool label="Protección" box="w-6">
          <Icon w={14} h={14}>
            <path d="M3 1l4-1 6 3 1 9-6 2-6-2-2-5z" fill="#86b81c" />
            <path d="M4 7l2.500 2.500L11 5" stroke="#fff" strokeWidth="2" />
          </Icon>
        </Tool>
        <Tool label="Batería" box="ml-[3px] w-4">
          <Icon w={8} h={15}>
            <path d="M1 2.500h6v11H1zM3 1h2" stroke="#fff" strokeWidth="1.500" />
            <path d="M2.500 5.500h3v3h-3z" fill="#333" />
            <path d="M2.500 9h3v3.500h-3z" fill="#fff" />
          </Icon>
        </Tool>
        <Tool label="Teclado" box="w-6">
          <Icon w={14} h={12}>
            <rect x="1" y="1" width="12" height="10" rx="1" fill="#333" stroke="#fff" strokeWidth="1.500" />
            <path d="M3 4h8M3 8h3M8 8h3" stroke="#fff" strokeWidth="1.500" />
          </Icon>
        </Tool>
        <Tool label="Volumen" box="w-[22px]">
          <Icon w={15} h={13}>
            <path d="M0 4h3l4-4v13L3 9H0z" fill="#fff" />
            <path d="M9 4c1 1.500 1 3.500 0 5M11 2.500c2 2.500 2 5.500 0 8M13 1c2.500 3.500 2.500 7.500 0 11" stroke="#fff" />
          </Icon>
        </Tool>
        <Tool label="Red" box="w-6">
          <Icon w={14} h={12}>
            <path d="M0 12v-2h2v2zM3 12V8h2v4zM6 12V6h2v6zM9 12V3h2v9z" fill="#fff" />
            <path d="M12 12V0h2v12z" fill="#666" />
          </Icon>
        </Tool>
        <div className="w-[38px] text-center leading-[16px]">
          ESP<br />ES
        </div>
        <div className="ml-[2px] w-[66px] text-center leading-[16px] whitespace-nowrap">
          12:13 a. m.<br />07/06/2013
        </div>
        <span className="w-[16px]" />
      </div>
    </div>
  );
}

export default function App() {
  return (
    <div className="flex h-dvh flex-col overflow-hidden border-x-[3px] border-black bg-white font-['Noto_Sans','Open_Sans',sans-serif] text-[#333]">
      <TitleBar />
      <TabStrip />
      <div className="flex shrink-0 border-b border-[#d4d4d4] pt-1">
        <ClipboardGroup />
        <FontGroup />
        <AlignGroup />
        <NumberGroup />
        <StylesGroup />
        <CellsGroup />
        <EditGroup />
        <div className="flex flex-1 items-end justify-end pr-2 pb-[7px]">
          <button type="button" aria-label="Contraer la cinta">
            <Icon w={8} h={6}><path d="M1 5l3-3 3 3" stroke="#555" strokeWidth="2" /></Icon>
          </button>
        </div>
      </div>
      <FormulaBar />
      <div className="flex shrink-0">
        <Sheet />
        <VerticalScroll />
      </div>
      <SheetTabs />
      <StatusBar />
      <TaskBar />
    </div>
  );
}
